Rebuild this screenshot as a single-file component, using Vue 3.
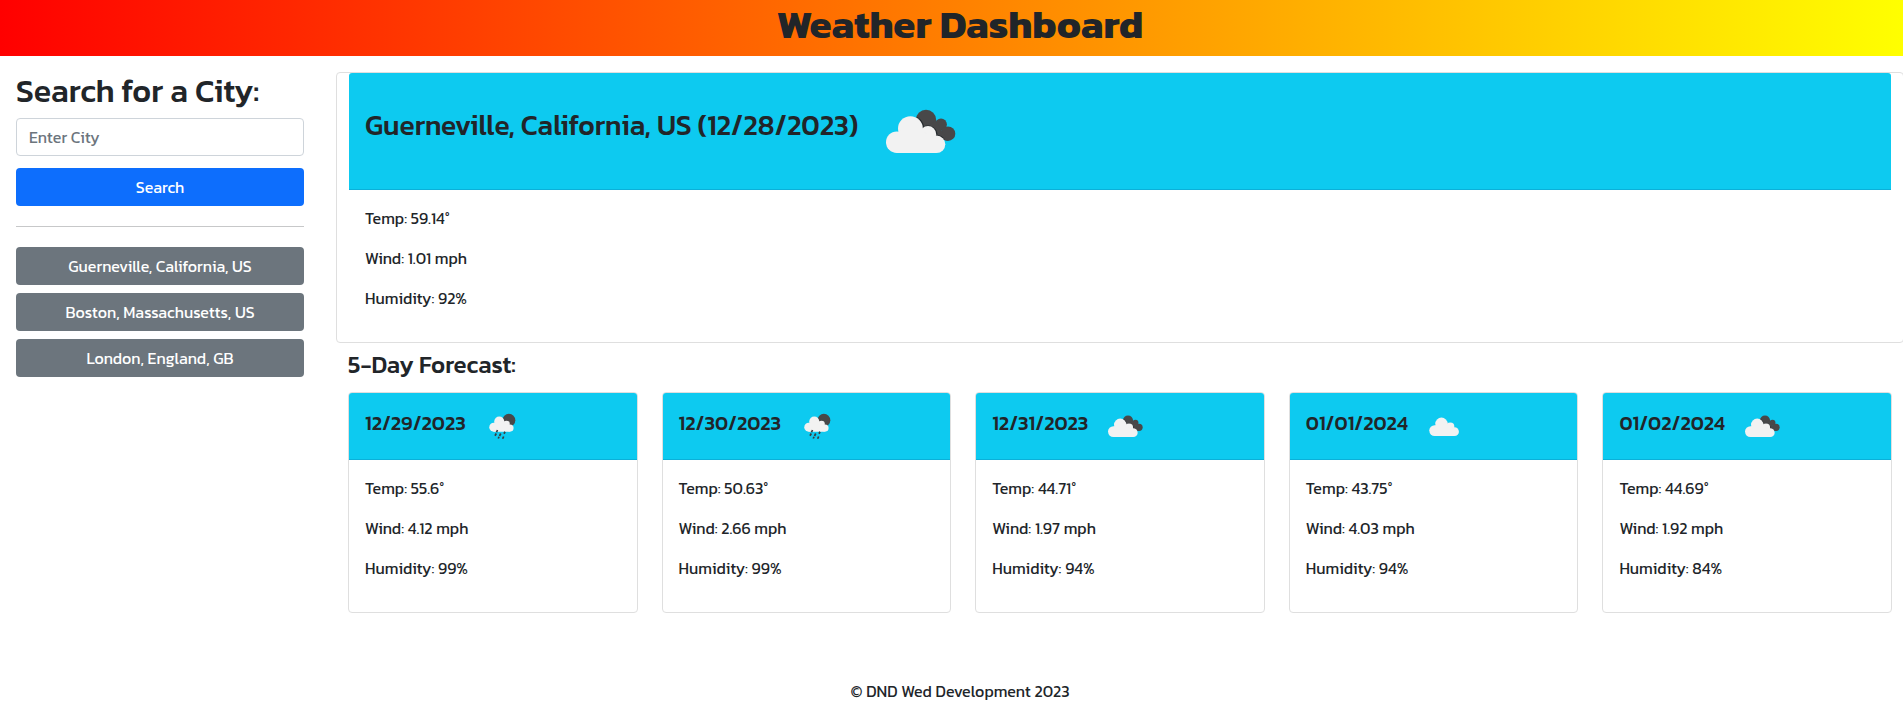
<script setup>
const cities = ['Guerneville, California, US', 'Boston, Massachusetts, US', 'London, England, GB']

const current = {
  title: 'Guerneville, California, US (12/28/2023)',
  lines: ['Temp: 59.14°', 'Wind: 1.01 mph', 'Humidity: 92%'],
}

const forecast = [
  { date: '12/29/2023', icon: 'rain', lines: ['Temp: 55.6°', 'Wind: 4.12 mph', 'Humidity: 99%'] },
  { date: '12/30/2023', icon: 'rain', lines: ['Temp: 50.63°', 'Wind: 2.66 mph', 'Humidity: 99%'] },
  { date: '12/31/2023', icon: 'broken', lines: ['Temp: 44.71°', 'Wind: 1.97 mph', 'Humidity: 94%'] },
  { date: '01/01/2024', icon: 'cloud', lines: ['Temp: 43.75°', 'Wind: 4.03 mph', 'Humidity: 94%'] },
  { date: '01/02/2024', icon: 'broken', lines: ['Temp: 44.69°', 'Wind: 1.92 mph', 'Humidity: 84%'] },
]
</script>

<template>
  <svg class="defs" width="0" height="0">
    <defs>
      <g id="cloud">
        <circle cx="26.8" cy="61.2" r="10.8" />
        <circle cx="40.4" cy="47.6" r="12.4" />
        <circle cx="58" cy="53.3" r="8.2" />
        <circle cx="66.6" cy="63.3" r="8.7" />
        <path d="M26.8 72V52L36 46L52 50L66 58V72Z" />
      </g>
      <g id="icon-cloud"><use href="#cloud" x="2.5" y="-2" fill="#f2f2f2" /></g>
      <g id="icon-broken">
        <g fill="#484849">
          <circle cx="56" cy="39" r="10.2" />
          <circle cx="71" cy="43.5" r="5.9" />
          <circle cx="78" cy="52.7" r="7.3" />
          <path d="M52 46L66 40L78 60L66 57Z" />
        </g>
        <path d="M47 36.5A13.2 13.2 0 0 1 53.6 46.5A8.8 8.8 0 0 1 66.8 54.4A9.3 9.3 0 0 1 74 58.5" fill="none" stroke="#252a2d" stroke-width="1.4" />
        <use href="#cloud" fill="#f2f2f2" />
      </g>
      <g id="icon-rain">
        <circle cx="61.8" cy="38.5" r="12.9" fill="#484849" />
        <g transform="translate(9.4 2.3) scale(.82)">
          <use href="#cloud" fill="#f2f2f2" />
        </g>
        <path d="M39 58l-2 4.5M36.5 65l-2.5 4.5M45.5 65l-2.5 5M54 61.5l-2 4M42 71.5l-1.5 3.5M51.3 71l-2 4.5" fill="none" stroke="#3c3c3e" stroke-width="3.4" />
      </g>
    </defs>
  </svg>
  <div class="page">
    <header class="banner"><h1>Weather Dashboard</h1></header>
    <div class="content">
      <aside class="sidebar">
        <h2>Search for a City:</h2>
        <input class="field" type="text" placeholder="Enter City" />
        <button class="btn primary">Search</button>
        <hr />
        <div class="history">
          <button v-for="c in cities" :key="c" class="btn">{{ c }}</button>
        </div>
      </aside>
      <main class="main">
        <section class="card current">
          <div class="card-header">
            <h3>{{ current.title }}</h3>
            <svg width="100" height="100" viewBox="0 0 100 100"><use href="#icon-broken" /></svg>
          </div>
          <div class="card-body">
            <p v-for="l in current.lines" :key="l">{{ l }}</p>
          </div>
        </section>
        <h4>5-Day Forecast:</h4>
        <div class="days">
          <section v-for="d in forecast" :key="d.date" class="card">
            <div class="card-header">
              <h5>{{ d.date }}</h5>
              <svg width="50" height="50" viewBox="0 0 100 100"><use :href="'#icon-' + d.icon" /></svg>
            </div>
            <div class="card-body">
              <p v-for="l in d.lines" :key="l">{{ l }}</p>
            </div>
          </section>
        </div>
      </main>
    </div>
    <footer>© DND Wed Development 2023</footer>
  </div>
</template>

<style>
body { margin: 0; background: #fff; overflow: hidden; }
</style>

<style scoped>
* { box-sizing: border-box; }
.defs { display: block; }
.page {
  width: 1920px;
  height: 719px;
  font: 400 16px/24px Kanit, Roboto, sans-serif;
  color: #212529;
}
h1, h2, h3, h4, h5, p { margin: 0; font-weight: 500; line-height: 1.2; white-space: nowrap; }
.banner {
  height: 56px;
  text-align: center;
  background: linear-gradient(to right, red, yellow 1903px);
}
h1 { font-size: 40px; line-height: 48px; font-weight: 700; }
.content { display: flex; gap: 32px; padding: 16px 0 0 16px; height: 623px; }
.sidebar { width: 288px; flex: none; }
h2 { font-size: 32px; line-height: 38px; margin-bottom: 8px; }
.field {
  display: block;
  width: 100%;
  height: 38px;
  padding: 6px 12px;
  border: 1px solid #ced4da;
  border-radius: 4px;
  font: inherit;
  margin-bottom: 12px;
}
.field::placeholder { color: #6c757d; opacity: 1; }
.btn {
  display: block;
  width: 100%;
  height: 38px;
  padding: 6px 12px;
  border: 0;
  border-radius: 4px;
  background: #6c757d;
  color: #fff;
  font: inherit;
  text-align: center;
}
.primary { background: #0d6efd; }
hr { margin: 20px 0; border: 0; height: 1px; background: #c7c8c9; }
.history { display: grid; gap: 8px; }
.main { width: 1568px; flex: none; }
.card { border: 1px solid #dfdfdf; border-radius: 4px; background: #fff; }
.card-header {
  display: flex;
  gap: 12px;
  padding: 8px 16px;
  background: #0dcaf0;
  border-bottom: 1px solid #0bb0d9;
  border-radius: 3px 3px 0 0;
}
.card-header svg { display: block; flex: none; }
.current { height: 271px; padding: 0 12px; }
h3 { font-size: 28px; line-height: 89px; }
h4 { font-size: 24px; line-height: 29px; margin: 7px 0 13px 12px; }
h5 { font-size: 20px; line-height: 44px; }
.card-body { padding: 16px; }
p { font-weight: 400; line-height: 24px; margin-bottom: 16px; }
.days { display: grid; grid-template-columns: repeat(5, 1fr); gap: 24px; padding: 0 12px; }
.days .card { height: 221px; }
footer { text-align: center; }
</style>
